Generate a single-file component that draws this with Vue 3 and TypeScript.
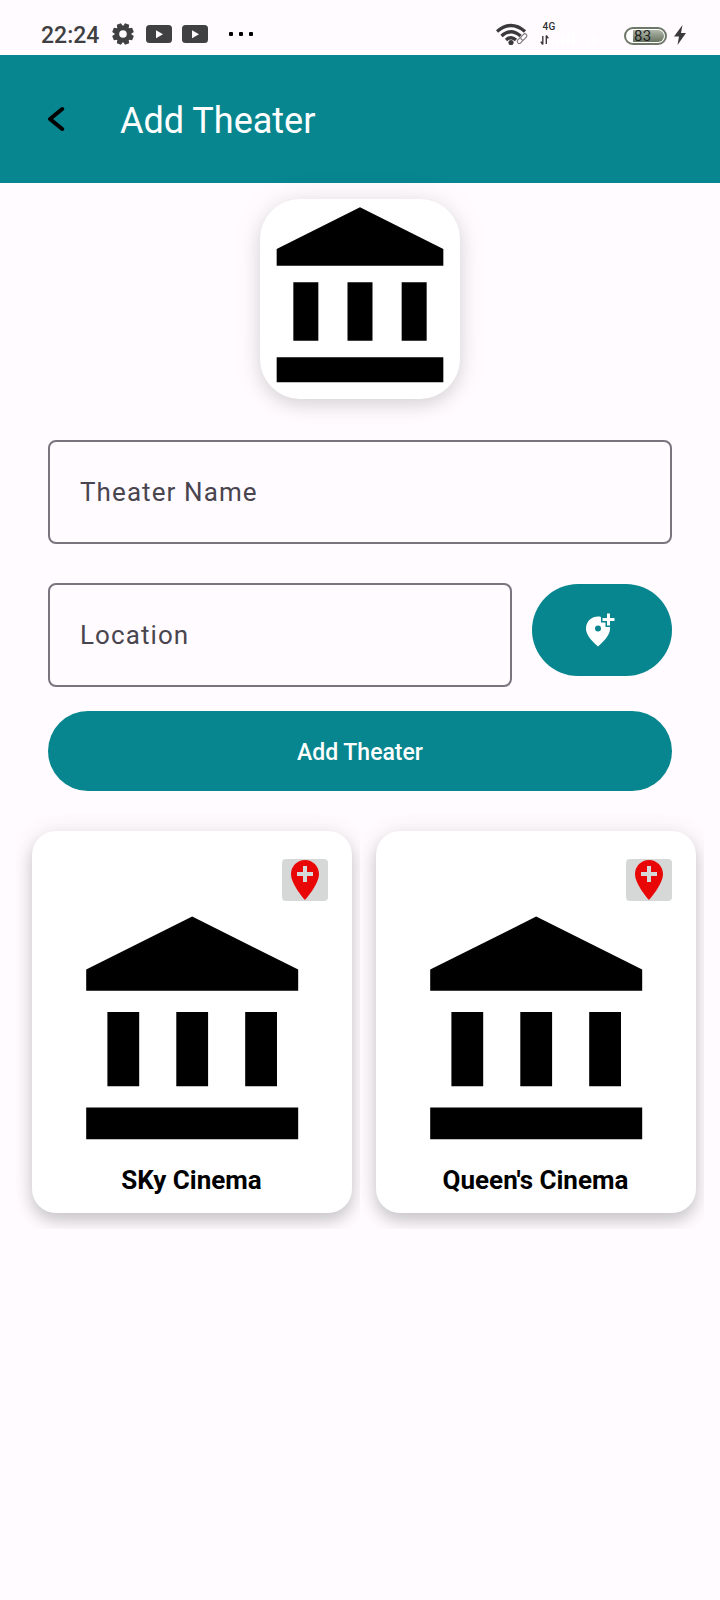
<script setup lang="ts">
import { ref } from 'vue'

interface Theater {
  id: number
  name: string
}

const theaters = ref<Theater[]>([
  { id: 1, name: 'SKy Cinema' },
  { id: 2, name: "Queen's Cinema" },
])

const bankPath =
  'M12 1L2 6v2h20V6zM4 10h3v7H4zM10.5 10h3v7h-3zM17 10h3v7h-3zM2 19h20v3H2z'
const teeth = [0, 45, 90, 135, 180, 225, 270, 315]
</script>

<template>
  <div class="screen">
    <div class="status">
      <span class="clock">22:24</span>
      <svg class="gear" viewBox="-11 -11 22 22">
        <path v-for="a in teeth" :key="a" d="M-3.400-6L-2.200-10.800H2.200L3.400-6z" :transform="`rotate(${a + 22.5})`" fill="#404042" />
        <circle r="6" fill="none" stroke="#404042" stroke-width="4.400" />
      </svg>
      <svg v-for="n in 2" :key="n" class="video" viewBox="0 0 26 18">
        <rect width="26" height="18" rx="3.500" fill="#404042" />
        <path d="M10 5.200v8l7-4z" fill="#fffbff" />
      </svg>
      <span class="dots"><i /><i /><i /></span>
      <span class="spacer" />
      <svg class="wifi" viewBox="0 0 34 24">
        <g fill="none" stroke="#3a3a3b" stroke-width="3.300">
          <path d="M1 8.500Q15-3.500 29 8.500" />
          <path d="M5.500 13Q15 4.500 24.500 13" />
          <path d="M10 17Q15 12.500 20 17" />
        </g>
        <circle cx="15" cy="19.500" r="2.600" fill="#3a3a3b" />
        <g transform="rotate(-45 26 15.500)" fill="#fffbff" stroke="#777" stroke-width="1.100">
          <rect x="20" y="13.600" width="7" height="4" rx="2" />
          <rect x="25" y="13.600" width="7" height="4" rx="2" />
        </g>
      </svg>
      <div class="network">
        <span class="gen">4G</span>
        <svg viewBox="0 0 60 18" class="bars">
          <path d="M2.800 4v8.500M0.800 9.700l2 2.800M6.300 12V3.500M6.300 3.500l2 2.800" fill="none" stroke="#3a3a3b" stroke-width="1.400" />
          <path d="M10 9h3v4h-3zM15.500 6h3v7h-3zM21 3h3v10h-3zM26.500 0h3v13h-3zM32 0h3v13h-3zM47 9h3v4h-3zM52.500 5h3v8h-3z" fill="#fff" />
        </svg>
      </div>
      <div class="battery"><span class="charge">83</span></div>
      <svg class="bolt" viewBox="0 0 12 20">
        <path d="M8.500 0L0 11.500h5L3.500 20 12 8H7z" fill="#3a3a3b" />
      </svg>
    </div>

    <header class="appbar">
      <svg class="back" viewBox="0 0 18 26">
        <path d="M15.200 3L3 13l12.200 10" fill="none" stroke="#000" stroke-width="4" stroke-linecap="round" stroke-linejoin="round" />
      </svg>
      <h1>Add Theater</h1>
    </header>

    <div class="logo">
      <svg viewBox="0 0 24 24"><path :d="bankPath" /></svg>
    </div>

    <div class="field">Theater Name</div>
    <div class="row">
      <div class="field location">Location</div>
      <button class="pick" aria-label="Pick location">
        <svg viewBox="0 0 24 24">
          <path
            fill="#fff"
            fill-rule="evenodd"
            d="M20 1v3h3v2h-3v3h-2V6h-3V4h3V1zM12 13a2 2 0 1 0 0-4 2 2 0 0 0 0 4zM14 3.250V7h3v3h2.920c.05.39.08.79.08 1.200 0 3.320-2.670 7.250-8 11.800-5.330-4.550-8-8.480-8-11.800C4 6.220 7.800 3 12 3c.68 0 1.350.08 2 .25z"
          />
        </svg>
      </button>
    </div>
    <button class="submit">Add Theater</button>

    <div class="grid">
      <div v-for="t in theaters" :key="t.id" class="cell">
        <article class="card">
          <div class="badge">
            <svg viewBox="0 0 24 24">
              <path fill="#e90606" d="M12 2C8.140 2 5 5.140 5 9c0 5.250 7 13 7 13s7-7.750 7-13c0-3.860-3.140-7-7-7zm4 8h-3v3h-2v-3H8V8h3V5h2v3h3z" />
            </svg>
          </div>
          <svg class="bank" viewBox="0 0 24 24"><path :d="bankPath" /></svg>
          <div class="name">{{ t.name }}</div>
        </article>
      </div>
    </div>
  </div>
</template>

<style>
body {
  margin: 0;
  background: #fffbff;
}
</style>

<style scoped>
.screen {
  width: 720px;
  height: 1600px;
  overflow: hidden;
  background: #fffbff;
  font-family: Roboto, 'Liberation Sans', sans-serif;
  box-sizing: border-box;
}
svg {
  display: block;
  flex: none;
}
button {
  border: 0;
  padding: 0;
  font: inherit;
  background: #08868f;
  color: #fff;
}
.status {
  display: flex;
  height: 55px;
  box-sizing: border-box;
  padding: 14px 34px 0 41px;
  align-items: flex-start;
}
.clock {
  width: 71px;
  font-size: 23px;
  font-weight: 500;
  line-height: 44px;
  color: #404042;
}
.gear {
  width: 22px;
  height: 22px;
  margin-top: 9px;
}
.video {
  width: 26px;
  height: 18px;
  margin: 11px 0 0 12px;
}
.video + .video {
  margin-left: 10px;
}
.dots {
  display: flex;
  gap: 6px;
  margin: 18px 0 0 21px;
}
.dots i {
  width: 4px;
  height: 4px;
  border-radius: 1px;
  background: #000;
}
.spacer {
  flex: 1;
}
.wifi {
  width: 34px;
  height: 24px;
  margin: 9px 10px 0 0;
}
.network {
  width: 84px;
  padding-top: 7px;
}
.gen {
  display: block;
  margin-left: 2.500px;
  font-size: 10px;
  font-weight: 500;
  line-height: 12px;
  color: #303030;
  letter-spacing: 0.4px;
  height: 11px;
}
.bars {
  width: 60px;
  height: 18px;
}
.battery {
  width: 43px;
  height: 18px;
  box-sizing: border-box;
  margin: 12.500px 7px 0 0;
  padding: 1px;
  border: 2px solid #6d7868;
  border-radius: 9px;
  background: #fff;
  display: flex;
}
.charge {
  margin-left: 6px;
  width: 31px;
  border-radius: 0 6px 6px 0;
  background: linear-gradient(#b0b8aa, #68735f);
  color: #222;
  font-size: 15px;
  line-height: 12px;
  padding-left: 1px;
  letter-spacing: 0.4px;
}
.bolt {
  width: 12px;
  height: 20px;
  margin-top: 11px;
}
.appbar {
  height: 128px;
  box-sizing: border-box;
  display: flex;
  align-items: flex-start;
  background: #08868f;
  padding-left: 47px;
}
.back {
  width: 18px;
  height: 26px;
  margin-top: 51px;
}
h1 {
  margin: 45px 0 0 55px;
  font-size: 36px;
  font-weight: 400;
  line-height: 42px;
  color: #fff;
}
.logo {
  width: 200px;
  height: 200px;
  margin: 16px auto 41px;
  border-radius: 40px;
  background: #fff;
  box-shadow: 0 6px 18px rgba(0, 0, 0, 0.13), 0 0 36px rgba(0, 0, 0, 0.06);
}
.logo svg {
  width: 200px;
  height: 200px;
}
.field {
  height: 104px;
  box-sizing: border-box;
  margin: 0 48px;
  padding-left: 30px;
  border: 2px solid #79747e;
  border-radius: 8px;
  font-size: 26px;
  line-height: 100px;
  letter-spacing: 1.090px;
  color: #49454f;
}
.row {
  display: flex;
  margin: 39px 48px 24px;
  gap: 20px;
}
.location {
  flex: 1;
  margin: 0;
}
.pick {
  width: 140px;
  height: 92px;
  margin-top: 1px;
  border-radius: 46px;
  display: flex;
  justify-content: center;
}
.pick svg {
  width: 36px;
  height: 36px;
  margin: 27.500px 8px 0 0;
}
.submit {
  display: block;
  width: 624px;
  height: 80px;
  margin: 0 48px;
  border-radius: 40px;
  font-size: 23px;
  font-weight: 500;
  line-height: 80px;
  padding-top: 2px;
}
.grid {
  display: grid;
  grid-template-columns: 344px 344px;
  margin: 24px 16px 0;
}
.cell {
  overflow: hidden;
  padding: 16px 8px 16px 16px;
}
.card {
  height: 382px;
  box-sizing: border-box;
  padding-top: 28px;
  border-radius: 24px;
  background: #fff;
  box-shadow: 0 8px 16px rgba(0, 0, 0, 0.19), 0 0 28px rgba(0, 0, 0, 0.07);
  display: flex;
  flex-direction: column;
  align-items: center;
}
.badge {
  align-self: flex-end;
  width: 46px;
  height: 42px;
  margin-right: 24px;
  border-radius: 4px;
  background: #d6d7d7;
  display: flex;
  align-items: center;
  justify-content: center;
}
.badge svg {
  width: 48px;
  height: 48px;
}
.bank {
  width: 254.400px;
  height: 254.400px;
  margin-top: 4.600px;
}
.name {
  margin: 5px 1px 0 0;
  font-size: 26px;
  font-weight: 700;
  line-height: 30px;
  color: #000;
}
</style>
